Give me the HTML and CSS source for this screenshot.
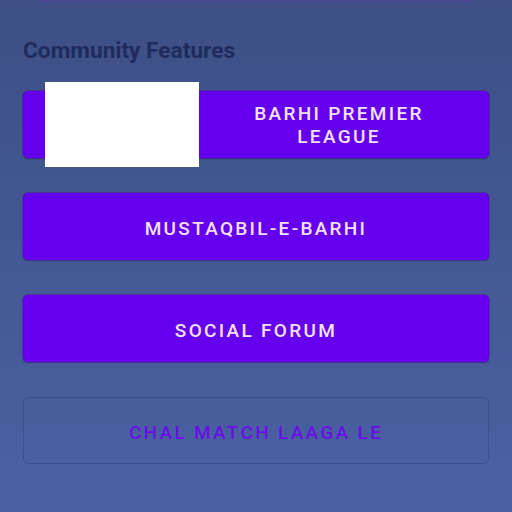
FILE: index.html
```html
<!DOCTYPE html>
<html lang="en">

<head>
  <meta charset="UTF-8" />
  <meta name="viewport" content="width=device-width, initial-scale=1.0" />
  <title>Community Features</title>
  <link rel="stylesheet" href="styles.css">
</head>

<body>
  <div class="card_edge"></div>

  <h2 class="section_title">Community Features</h2>

  <div class="features">
    <button class="feature with_icon">
      <span class="feature_icon"></span>
      BARHI PREMIER<br>LEAGUE
    </button>

    <button class="feature">MUSTAQBIL-E-BARHI</button>

    <button class="feature">SOCIAL FORUM</button>

    <button class="feature outlined">CHAL MATCH LAAGA LE</button>
  </div>
</body>

</html>
```

FILE: styles.css
```css
body {
  margin: 0;
  padding: 0 23px;
  height: 512px;
  box-sizing: border-box;
  background: linear-gradient(180deg, #3d4f84 0%, #4a62a4 100%);
  font-family: Roboto, "Noto Sans", sans-serif;
  overflow: hidden;
}

.card_edge {
  height: 2px;
  margin: 0 17px;
  background-color: #4a4a8c;
  border-radius: 0 0 6px 6px;
}

.section_title {
  margin: 36px 0 0;
  font-size: 22.7px;
  font-weight: 700;
  line-height: 26px;
  color: #1f2b5c;
}

.features {
  display: flex;
  flex-direction: column;
  gap: 35px;
  margin-top: 27px;
}

.feature {
  position: relative;
  height: 67px;
  padding: 3px 10px 0;
  border: none;
  border-radius: 5px;
  background-color: #6400ee;
  color: #f6e2ff;
  font-family: Roboto, "Noto Sans", sans-serif;
  font-size: 19px;
  font-weight: 500;
  letter-spacing: 2.3px;
  line-height: 23px;
  text-align: center;
  box-shadow: 0 0 0 1px rgba(80, 0, 170, 0.35), 0 1px 2px rgba(0, 0, 0, 0.2);
}

.with_icon {
  padding: 1px 10px 0 176px;
}

.feature_icon {
  position: absolute;
  left: 22px;
  top: -9px;
  width: 154px;
  height: 85px;
  background-color: #fff;
}

.outlined {
  background-color: transparent;
  border: 1px solid rgba(40, 50, 110, 0.35);
  color: #6a0ee8;
  box-shadow: none;
}
```
